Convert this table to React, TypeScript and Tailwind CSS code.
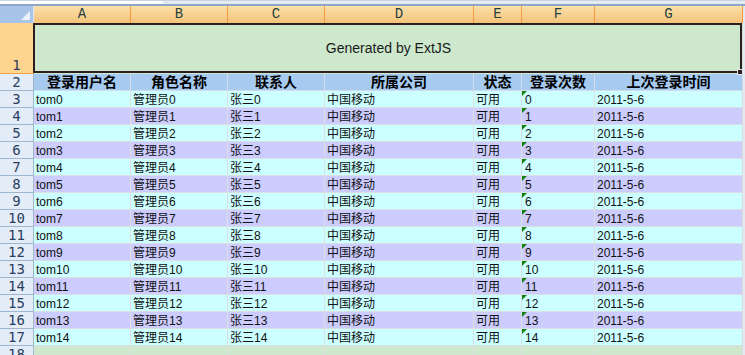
import React from 'react';

const columns = [
  { id: 'A', w: 'w-[97px]', title: '登录用户名' },
  { id: 'B', w: 'w-[97px]', title: '角色名称' },
  { id: 'C', w: 'w-[97px]', title: '联系人' },
  { id: 'D', w: 'w-[149px]', title: '所属公司' },
  { id: 'E', w: 'w-[48px]', title: '状态' },
  { id: 'F', w: 'w-[73px]', title: '登录次数' },
  { id: 'G', w: 'w-[148px]', title: '上次登录时间' },
];

const users = Array.from({ length: 15 }, (_, i) => ({
  name: `tom${i}`,
  role: `管理员${i}`,
  contact: `张三${i}`,
  company: '中国移动',
  status: '可用',
  count: `${i}`,
  last: '2011-5-6',
}));

const RowHead: React.FC<{ n: number; h?: string }> = ({ n, h = 'h-[17px]' }) => (
  <div
    className={`${h} w-[34px] shrink-0 flex items-end justify-center bg-[#e4ecf7] border-r border-b border-[#9eb6ce] text-[#27405f] text-[14px] leading-[16px] font-['DejaVu_Sans_Mono',monospace]`}
  >
    {n}
  </div>
);

const App: React.FC = () => {
  return (
    <div className="w-[745px] h-[355px] overflow-hidden bg-[#e3e9f3] font-['Liberation_Sans','Noto_Sans_CJK_SC',sans-serif] text-[12px] text-[#111]">
      {/* strip above the sheet */}
      <div className="h-[6px] flex border-b-2 border-[#8ea6c5]">
        <div className="w-[163px] bg-white border-t border-[#c8d4e2]" />
        <div className="flex-1 bg-[#e4eaf2] border-t border-[#c8d4e2]" />
      </div>

      {/* column letters */}
      <div className="h-[17px] flex">
        <div className="w-[34px] shrink-0 relative bg-[#a9c4e9] border-r border-[#dbe6f4]">
          <div className="absolute right-[3px] bottom-[3px] w-0 h-0 border-b-[9px] border-b-[#eef3fa] border-l-[9px] border-l-transparent" />
        </div>
        {columns.map((c) => (
          <div
            key={c.id}
            className={`${c.w} shrink-0 flex items-center justify-center bg-gradient-to-b from-[#fbe0a9] to-[#f3c37a] border-r border-[#f29a3c] text-[#24403f] text-[14px] font-['Liberation_Mono',monospace]`}
          >
            {c.id}
          </div>
        ))}
      </div>

      {/* row 1: merged title cell with selection */}
      <div className="h-[51px] flex relative">
        <div className="w-[34px] shrink-0 flex items-end justify-center bg-[#ffd48f] border-r border-b border-[#f2a04a] text-[#27405f] text-[14px] leading-[16px] font-['DejaVu_Sans_Mono',monospace]">
          1
        </div>
        <div className="w-[709px] shrink-0 flex items-center justify-center bg-[#cde8cd] text-[14px] text-[#1a1a1a]">
          Generated by ExtJS
        </div>
        <div className="absolute left-[33px] top-0 w-[709px] h-[50px] border-2 border-[#2b1d20]" />
        <div className="absolute left-[737px] top-[46px] w-[6px] h-[6px] bg-[#2b1d20] border border-[#e8e8e8]" />
      </div>

      {/* row 2: field titles */}
      <div className="h-[17px] flex">
        <RowHead n={2} />
        {columns.map((c) => (
          <div
            key={c.id}
            className={`${c.w} shrink-0 flex items-center justify-center bg-[#a6caf0] border-r border-b border-[#d2dbe6] font-bold text-[14px] text-black`}
          >
            {c.title}
          </div>
        ))}
      </div>

      {/* data rows */}
      {users.map((u, i) => {
        const bg = i % 2 === 0 ? 'bg-[#ccffff]' : 'bg-[#ccccff]';
        const cell = `shrink-0 flex items-center pl-[2px] pt-px border-r border-b border-[#dcdfe2] ${bg}`;
        return (
          <div key={u.name} className="h-[17px] flex">
            <RowHead n={i + 3} />
            <div className={`w-[97px] ${cell}`}>{u.name}</div>
            <div className={`w-[97px] ${cell}`}>{u.role}</div>
            <div className={`w-[97px] ${cell}`}>{u.contact}</div>
            <div className={`w-[149px] ${cell}`}>{u.company}</div>
            <div className={`w-[48px] ${cell}`}>{u.status}</div>
            <div className={`w-[73px] relative ${cell} pl-[3px]`}>
              <div className="absolute left-0 top-0 w-0 h-0 border-t-[5px] border-t-[#108010] border-r-[5px] border-r-transparent" />
              {u.count}
            </div>
            <div className={`w-[148px] ${cell}`}>{u.last}</div>
          </div>
        );
      })}

      {/* row 18 */}
      <div className="h-[17px] flex">
        <RowHead n={18} />
        {columns.map((c) => (
          <div key={c.id} className={`${c.w} shrink-0 bg-[#cde8cd] border-r border-[#dcdfe2]`} />
        ))}
      </div>
    </div>
  );
};

export default App;
